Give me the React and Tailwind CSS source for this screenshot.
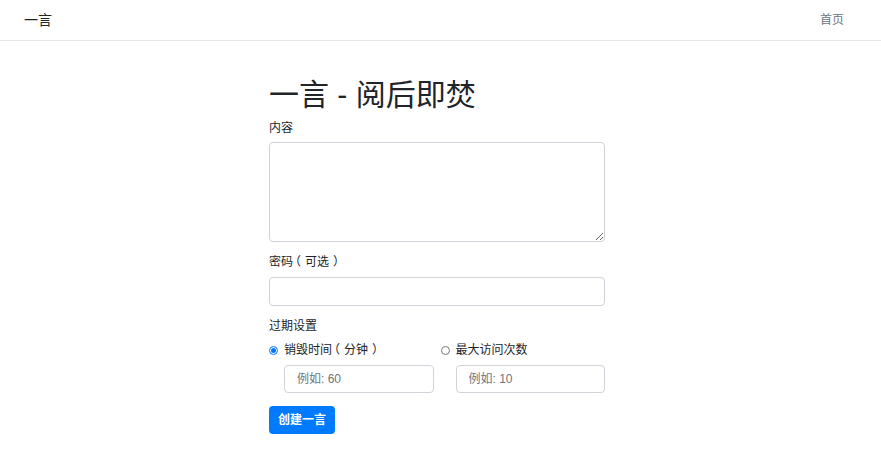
const font = { fontFamily: '"Liberation Sans", "Noto Sans CJK SC", sans-serif' };

const L = () => <span className="inline-block pl-[2px] pr-[4px] [font-feature-settings:'halt']">（</span>;
const R = () => <span className="inline-block pl-[4px] pr-[2px] [font-feature-settings:'halt']">）</span>;

const Radio = ({ checked, children }) => (
  <label className="flex items-center h-[18px] text-xs text-[#212529]">
    {checked ? (
      <span className="w-[9px] h-[9px] rounded-full border border-[#0075ff] flex items-center justify-center">
        <span className="w-[5px] h-[5px] rounded-full bg-[#0075ff]" />
      </span>
    ) : (
      <span className="w-[9px] h-[9px] rounded-full border border-[#767676]" />
    )}
    <span className="ml-[6px]">{children}</span>
  </label>
);

export default function App() {
  return (
    <div className="min-h-screen bg-white" style={font}>
      <nav className="h-[41px] border-b border-[#e5e5e5] flex items-center justify-between pl-[24px] pr-[37px]">
        <span className="text-[14px] text-[#212529]">一言</span>
        <a className="text-xs text-[#6c757d]" href="#">首页</a>
      </nav>

      <div className="flex justify-center pr-[7px]">
        <form className="w-[336px] flex flex-col" onSubmit={(e) => e.preventDefault()}>
          <h1 className="mt-[36px] text-[30px] leading-[36px] font-normal text-[#212529]">一言 - 阅后即焚</h1>

          <label className="mt-[6px] text-xs leading-[18px] text-[#212529]">内容</label>
          <textarea className="mt-[5px] h-[100px] w-full rounded border border-[#ced4da] px-3 py-1 text-xs outline-none" />

          <label className="mt-[11px] text-xs leading-[18px] text-[#212529]">
            密码<L />可选<R />
          </label>
          <input type="password" className="mt-[6px] h-[29px] w-full rounded border border-[#ced4da] px-3 text-xs outline-none" />

          <label className="mt-[11px] text-xs leading-[18px] text-[#212529]">过期设置</label>
          <div className="mt-[6px] grid grid-cols-2 gap-x-[7px]">
            <div className="flex flex-col">
              <Radio checked>
                销毁时间<L />分钟<R />
              </Radio>
              <input
                placeholder="例如: 60"
                className="mt-[6px] ml-[15px] h-[28px] rounded border border-[#ced4da] px-3 text-xs outline-none placeholder:text-[#6c757d]"
              />
            </div>
            <div className="flex flex-col">
              <Radio>最大访问次数</Radio>
              <input
                placeholder="例如: 10"
                className="mt-[6px] ml-[15px] h-[28px] rounded border border-[#ced4da] px-3 text-xs outline-none placeholder:text-[#6c757d]"
              />
            </div>
          </div>

          <div className="mt-[13px]">
            <button type="submit" className="h-[28px] px-[9px] rounded bg-[#007bff] text-white text-xs font-bold">
              创建一言
            </button>
          </div>
        </form>
      </div>
    </div>
  );
}
